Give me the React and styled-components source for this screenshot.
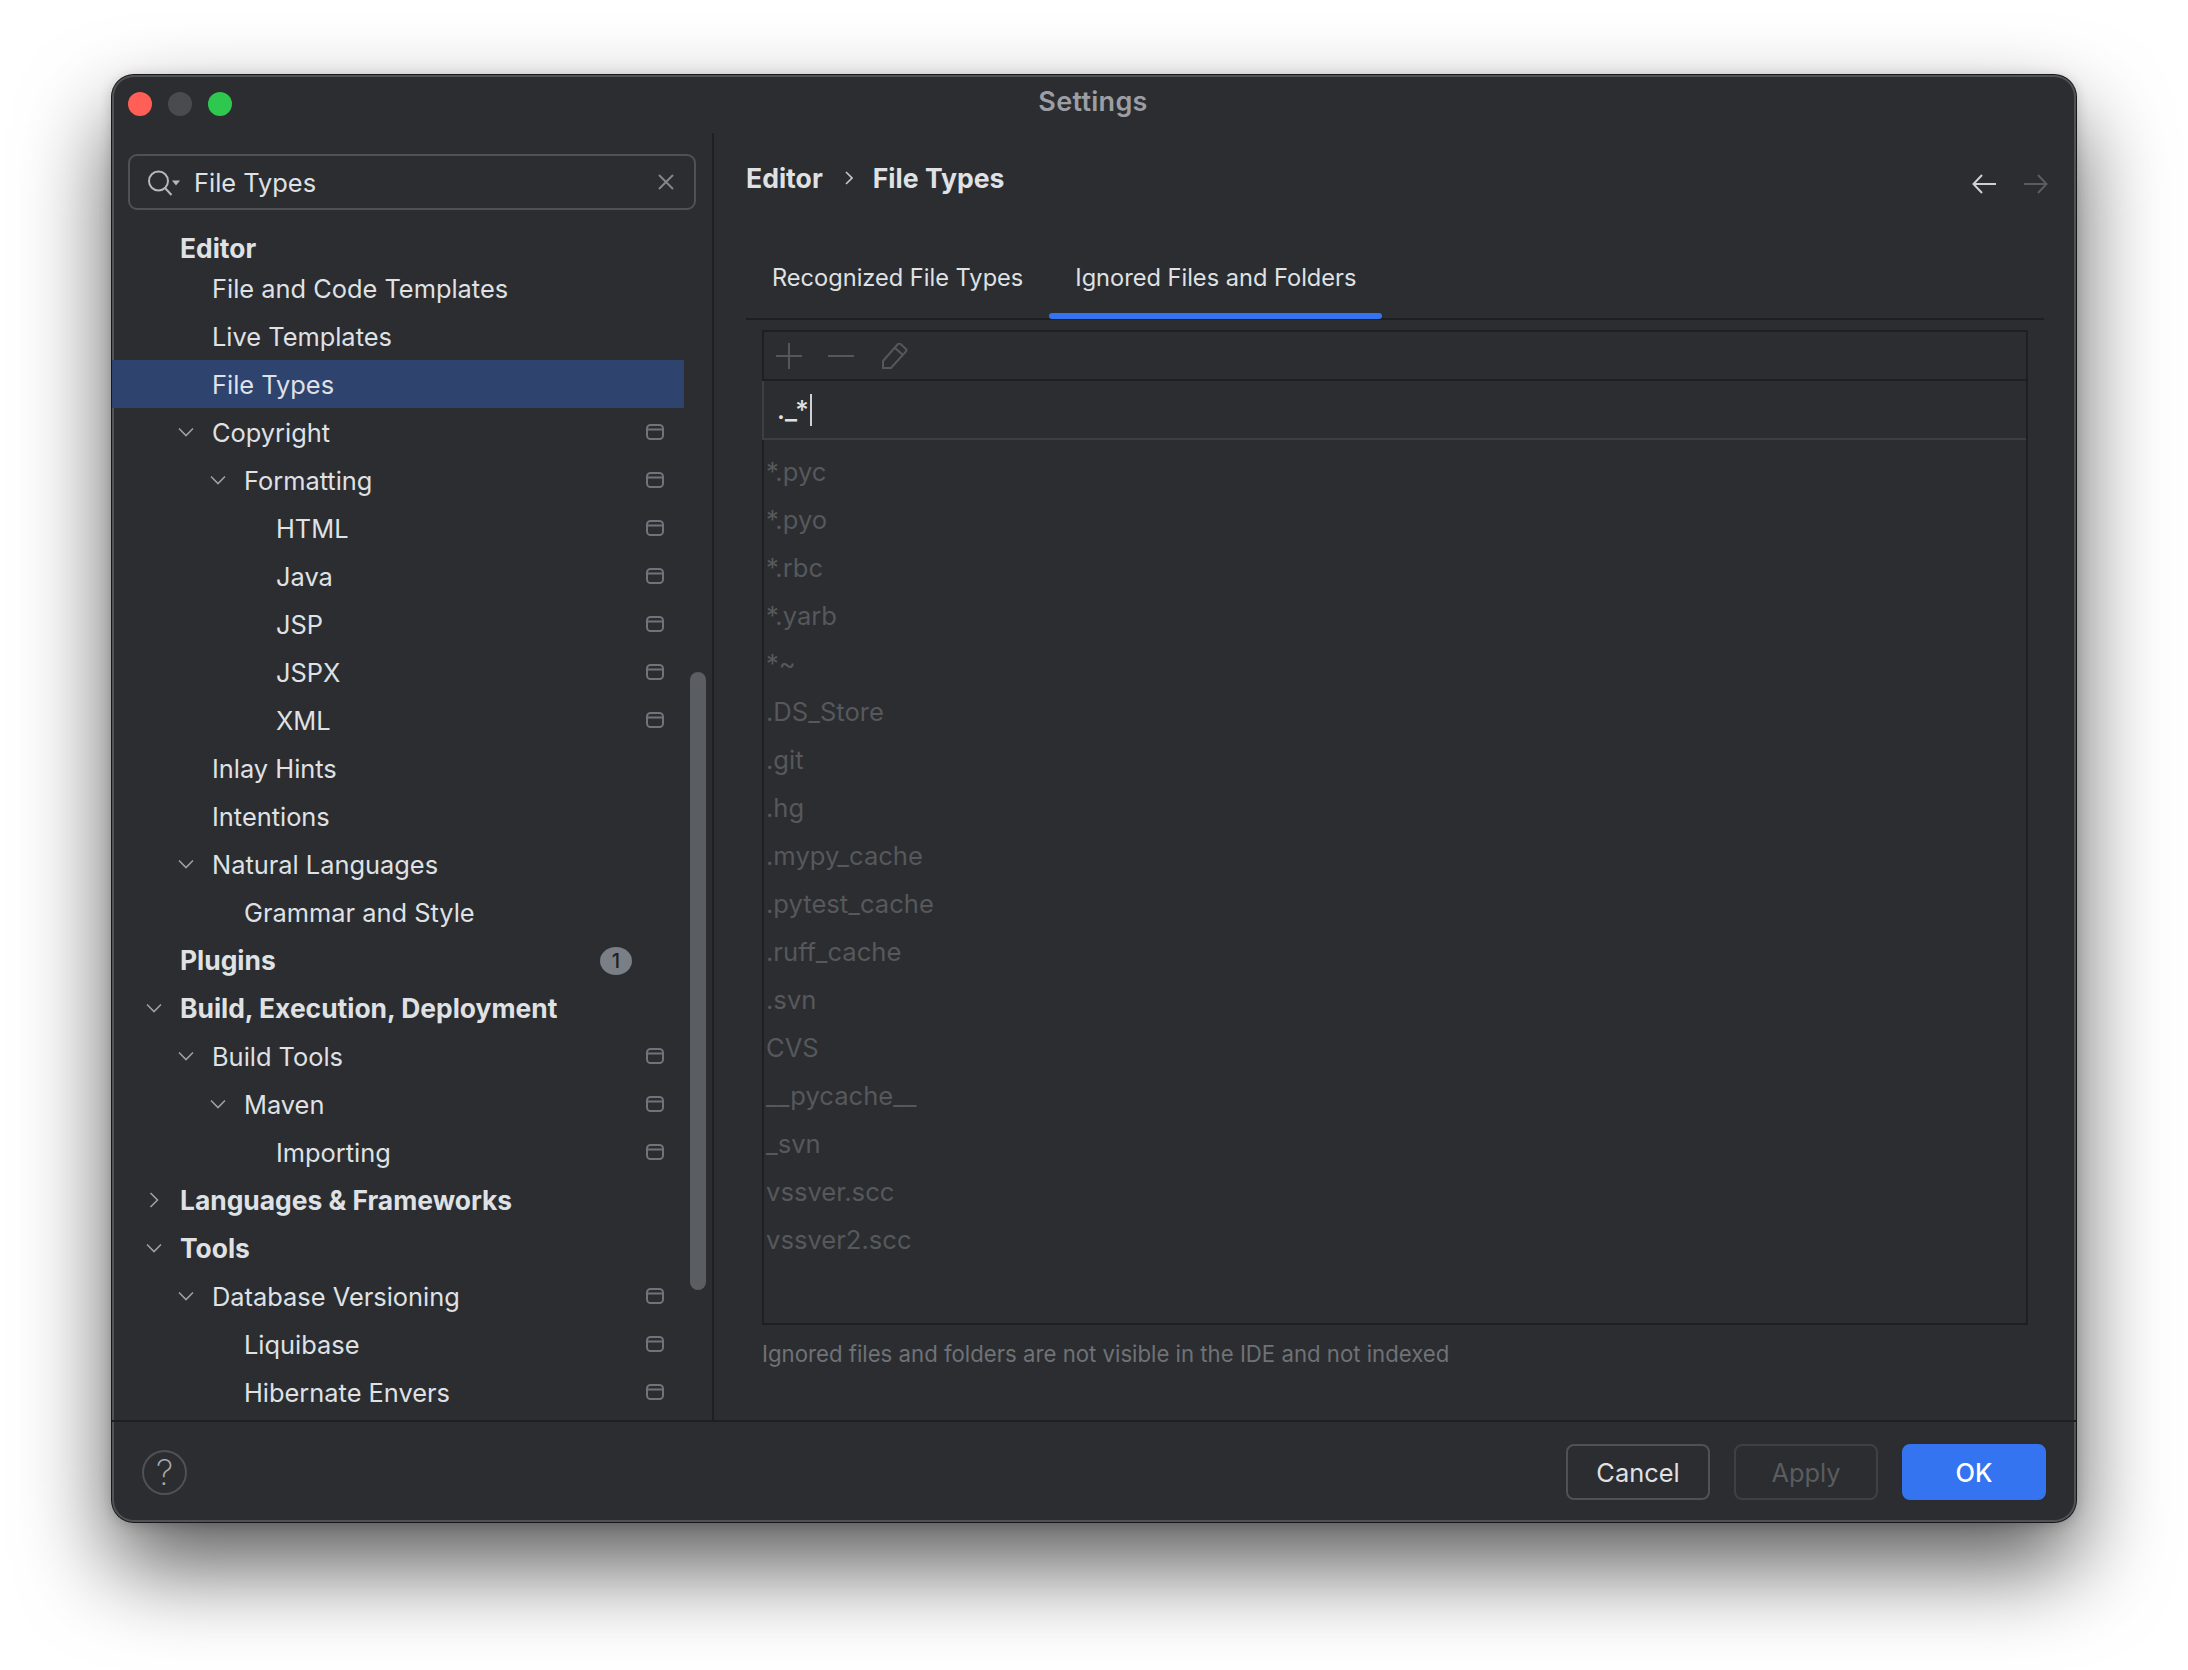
import React from 'react';
import styled, { createGlobalStyle } from 'styled-components';

const Global = createGlobalStyle`
  html, body { margin: 0; padding: 0; background: #fff; }
  body { font-family: Inter, "Liberation Sans", sans-serif; }
`;

const Stage = styled.div`
  width: 2188px;
  height: 1670px;
  box-sizing: border-box;
  padding: 75px 112px 0 112px;
  background: #fff;
  overflow: hidden;
`;

const Win = styled.div`
  width: 1964px;
  height: 1447px;
  box-sizing: border-box;
  display: grid;
  grid-template-rows: 58px 1fr 102px;
  background: #2b2d30;
  border-radius: 22px;
  overflow: hidden;
  box-shadow: inset 0 0 0 2px #505256, 0 0 0 1px #17181a, 0 44px 90px rgba(0, 0, 0, 0.65), 0 2px 14px rgba(0, 0, 0, 0.2);
`;

const TitleBar = styled.div`
  display: grid;
  grid-template-columns: 1fr auto 1fr;
  align-items: center;
  padding: 0 16px;
  height: 58px;
`;

const Lights = styled.div`
  display: flex;
  gap: 16px;
`;

const Light = styled.span`
  width: 24px;
  height: 24px;
  border-radius: 50%;
  background: ${(p) => p.$c};
`;

const Title = styled.div`
  color: #9c9ea3;
  font-size: 27px;
  font-weight: 600;
  letter-spacing: 0.3px;
  margin: -5px 0 0 -2px;
`;

const Body = styled.div`
  display: grid;
  grid-template-columns: 602px 1fr;
  min-height: 0;
`;

const Sidebar = styled.aside`
  display: flex;
  flex-direction: column;
  border-right: 2px solid #1e1f22;
  position: relative;
  min-height: 0;
  overflow: hidden;
`;

const SearchBox = styled.div`
  display: flex;
  align-items: center;
  height: 56px;
  box-sizing: border-box;
  margin: 21px 0 0 16px;
  width: 568px;
  padding: 0 20px 0 18px;
  border: 2px solid #4e5157;
  border-radius: 9px;
  color: #dfe1e5;
  font-size: 25.4px;
`;

const SearchText = styled.span`
  flex: 1;
  margin-left: 14px;
`;

const Tree = styled.div`
  display: flex;
  flex-direction: column;
  margin-top: 22px;
`;

const Row = styled.div`
  height: ${(p) => (p.$first ? 32 : 48)}px;
  flex: none;
  width: 572px;
  display: flex;
  align-items: center;
  box-sizing: border-box;
  position: relative;
  padding-left: ${(p) => 68 + p.$lvl * 32}px;
  padding-right: 20px;
  color: #dfe1e5;
  font-size: ${(p) => (p.$bold ? 26.4 : 25.4)}px;
  font-weight: ${(p) => (p.$bold ? 700 : 400)};
  background: ${(p) => (p.$sel ? '#2e436e' : 'transparent')};
`;

const RowLabel = styled.span`
  flex: 1;
  white-space: nowrap;
`;

const Chevron = styled.span`
  position: absolute;
  left: ${(p) => 34 + p.$lvl * 32}px;
  top: 16px;
  width: 16px;
  height: 16px;
  display: flex;
`;

const Badge = styled.span`
  width: 32px;
  height: 28px;
  margin: 2px 32px 0 0;
  border-radius: 50%;
  background: #7a7e85;
  color: #1e1f22;
  font-size: 20px;
  font-weight: 500;
  display: flex;
  align-items: center;
  justify-content: center;
`;

const ScrollThumb = styled.div`
  position: absolute;
  left: 578px;
  top: 539px;
  width: 16px;
  height: 618px;
  border-radius: 8px;
  background: #5a5d61;
`;

const Main = styled.main`
  display: flex;
  flex-direction: column;
  padding: 0 32px;
  min-height: 0;
`;

const Header = styled.div`
  display: flex;
  align-items: center;
  height: 36px;
  margin-top: 27px;
  font-size: 26.6px;
  font-weight: 700;
  color: #dfe1e5;
`;

const Crumb = styled.span``;

const CrumbSep = styled.span`
  display: flex;
  margin: 0 20px 0 22px;
`;

const Nav = styled.div`
  margin-left: auto;
  display: flex;
  gap: 28px;
  margin-top: 12px;
  margin-right: -4px;
`;

const Tabs = styled.div`
  display: flex;
  height: 104px;
  box-sizing: border-box;
  margin-top: 20px;
  border-bottom: 2px solid #1e1f22;
`;

const Tab = styled.div`
  height: 103px;
  flex: none;
  box-sizing: border-box;
  padding: 19px 26px 0;
  display: flex;
  align-items: center;
  color: #dfe1e5;
  font-size: 23.6px;
  position: relative;
  ${(p) => p.$active && `
    &::after {
      content: '';
      position: absolute;
      left: 0; right: 0; bottom: 0;
      height: 6px;
      border-radius: 3px;
      background: #3574f0;
    }
  `}
`;

const ListBox = styled.div`
  margin: 10px 16px 0 16px;
  height: 995px;
  box-sizing: border-box;
  border: 2px solid #1e1f22;
  display: flex;
  flex-direction: column;
`;

const Toolbar = styled.div`
  height: 47px;
  flex: none;
  display: flex;
  align-items: center;
  gap: 26px;
  padding-left: 12px;
  border-bottom: 2px solid #1e1f22;
`;

const PencilSlot = styled.span`
  display: flex;
  margin-left: 2px;
`;

const InputRow = styled.div`
  height: 59px;
  flex: none;
  box-sizing: border-box;
  display: flex;
  align-items: center;
  padding-left: 13px;
  color: #dfe1e5;
  font-size: 26px;
  font-weight: 500;
  border-bottom: 2px solid #3c3e42;
  border-left: 2px solid #3c3e42;
  margin-left: -2px;
`;

const Caret = styled.span`
  width: 2px;
  height: 32px;
  margin-left: 1px;
  background: #ced0d6;
`;

const Items = styled.div`
  display: flex;
  flex-direction: column;
  padding-top: 7px;
`;

const Item = styled.div`
  height: 48px;
  flex: none;
  display: flex;
  align-items: center;
  padding-left: 2px;
  color: #56585c;
  font-size: 25.6px;
`;

const Hint = styled.div`
  margin: 15px 0 0 16px;
  color: #6f7277;
  font-size: 22.2px;
`;

const Footer = styled.div`
  display: flex;
  align-items: center;
  border-top: 2px solid #1e1f22;
  padding: 0 30px;
`;

const Help = styled.div`
  width: 45px;
  height: 45px;
  box-sizing: border-box;
  border: 2px solid #4e5157;
  border-radius: 50%;
  display: flex;
  align-items: center;
  justify-content: center;
  color: #a8abb0;
  font-size: 35px;
  font-weight: 200;
`;

const Buttons = styled.div`
  margin-left: auto;
  display: flex;
  gap: 24px;
`;

const Btn = styled.div`
  width: 144px;
  height: 56px;
  box-sizing: border-box;
  border-radius: 8px;
  display: flex;
  align-items: center;
  justify-content: center;
  font-size: 25.4px;
  border: 2px solid ${(p) => (p.$primary ? '#3574f0' : p.$off ? '#3e4044' : '#4e5157')};
  background: ${(p) => (p.$primary ? '#3574f0' : 'transparent')};
  color: ${(p) => (p.$primary ? '#fff' : p.$off ? '#5a5c60' : '#dfe1e5')};
  font-weight: ${(p) => (p.$primary ? 500 : 400)};
`;

const ChevDown = () => (
  <svg width="16" height="16" viewBox="0 0 16 16" fill="none" stroke="#9da0a8" strokeWidth="1.6">
    <path d="M1 4.5 8 11.5 15 4.5" />
  </svg>
);
const ChevRight = () => (
  <svg width="16" height="16" viewBox="0 0 16 16" fill="none" stroke="#9da0a8" strokeWidth="1.6">
    <path d="M4.5 1 11.5 8 4.5 15" />
  </svg>
);
const ProjectIcon = () => (
  <svg width="18" height="16" viewBox="0 0 18 16" fill="none" stroke="#6f737a" strokeWidth="2">
    <rect x="1" y="1" width="16" height="14" rx="3.5" />
    <path d="M1 5.5H17" />
  </svg>
);
const SearchIcon = () => (
  <svg width="32" height="28" viewBox="0 0 32 28" fill="none">
    <circle cx="10.5" cy="13" r="9.5" stroke="#b4b8bf" strokeWidth="2" />
    <path d="M17 20 23.5 27" stroke="#b4b8bf" strokeWidth="2" />
    <path d="M24 12.5h8l-4 5z" fill="#b4b8bf" />
  </svg>
);
const CloseIcon = () => (
  <svg width="16" height="16" viewBox="0 0 16 16" fill="none" stroke="#83868c" strokeWidth="2">
    <path d="M1 1 15 15M15 1 1 15" />
  </svg>
);
const ArrowLeft = ({ c }) => (
  <svg width="24" height="20" viewBox="0 0 24 20" fill="none" stroke={c} strokeWidth="2">
    <path d="M24 10H1.5M10 1 1.5 10 10 19" />
  </svg>
);
const ArrowRight = ({ c }) => (
  <svg width="24" height="20" viewBox="0 0 24 20" fill="none" stroke={c} strokeWidth="2">
    <path d="M0 10H22.5M14 1 22.5 10 14 19" />
  </svg>
);
const PlusIcon = () => (
  <svg width="26" height="26" viewBox="0 0 26 26" stroke="#55575b" strokeWidth="2">
    <path d="M13 0V26M0 13H26" />
  </svg>
);
const MinusIcon = () => (
  <svg width="26" height="26" viewBox="0 0 26 26" stroke="#55575b" strokeWidth="2">
    <path d="M0 13H26" />
  </svg>
);
const PencilIcon = () => (
  <svg width="26" height="26" viewBox="0 0 26 26" fill="none" stroke="#55575b" strokeWidth="2">
    <path d="M1 25V18 L16 1 Q17 0 18.5 1 L24 6 Q25 7 24 8.5 L9 25ZM13 5 21 12" />
  </svg>
);

const tree = [
  { t: 'Editor', lvl: 0, bold: true, first: true },
  { t: 'File and Code Templates', lvl: 1 },
  { t: 'Live Templates', lvl: 1 },
  { t: 'File Types', lvl: 1, sel: true },
  { t: 'Copyright', lvl: 1, ch: 'd', p: true },
  { t: 'Formatting', lvl: 2, ch: 'd', p: true },
  { t: 'HTML', lvl: 3, p: true },
  { t: 'Java', lvl: 3, p: true },
  { t: 'JSP', lvl: 3, p: true },
  { t: 'JSPX', lvl: 3, p: true },
  { t: 'XML', lvl: 3, p: true },
  { t: 'Inlay Hints', lvl: 1 },
  { t: 'Intentions', lvl: 1 },
  { t: 'Natural Languages', lvl: 1, ch: 'd' },
  { t: 'Grammar and Style', lvl: 2 },
  { t: 'Plugins', lvl: 0, bold: true, badge: '1' },
  { t: 'Build, Execution, Deployment', lvl: 0, bold: true, ch: 'd' },
  { t: 'Build Tools', lvl: 1, ch: 'd', p: true },
  { t: 'Maven', lvl: 2, ch: 'd', p: true },
  { t: 'Importing', lvl: 3, p: true },
  { t: 'Languages & Frameworks', lvl: 0, bold: true, ch: 'r' },
  { t: 'Tools', lvl: 0, bold: true, ch: 'd' },
  { t: 'Database Versioning', lvl: 1, ch: 'd', p: true },
  { t: 'Liquibase', lvl: 2, p: true },
  { t: 'Hibernate Envers', lvl: 2, p: true },
];

const ignored = ['*.pyc', '*.pyo', '*.rbc', '*.yarb', '*~', '.DS_Store', '.git', '.hg', '.mypy_cache', '.pytest_cache', '.ruff_cache', '.svn', 'CVS', '__pycache__', '_svn', 'vssver.scc', 'vssver2.scc'];

export default function App() {
  return (
    <Stage>
      <Global />
      <Win>
        <TitleBar>
          <Lights>
            <Light $c="#ff5f57" />
            <Light $c="#4a4b4e" />
            <Light $c="#2fc84f" />
          </Lights>
          <Title>Settings</Title>
        </TitleBar>
        <Body>
          <Sidebar>
            <SearchBox>
              <SearchIcon />
              <SearchText>File Types</SearchText>
              <CloseIcon />
            </SearchBox>
            <Tree>
              {tree.map((r) => (
                <Row key={r.t} $lvl={r.lvl} $bold={r.bold} $sel={r.sel} $first={r.first}>
                  {r.ch && <Chevron $lvl={r.lvl}>{r.ch === 'd' ? <ChevDown /> : <ChevRight />}</Chevron>}
                  <RowLabel>{r.t}</RowLabel>
                  {r.p && <ProjectIcon />}
                  {r.badge && <Badge>{r.badge}</Badge>}
                </Row>
              ))}
            </Tree>
            <ScrollThumb />
          </Sidebar>
          <Main>
            <Header>
              <Crumb>Editor</Crumb>
              <CrumbSep>
                <svg width="8" height="14" viewBox="0 0 8 14" fill="none" stroke="#c4c6ca" strokeWidth="1.6">
                  <path d="M1 1 7 7 1 13" />
                </svg>
              </CrumbSep>
              <Crumb>File Types</Crumb>
              <Nav>
                <ArrowLeft c="#ced0d6" />
                <ArrowRight c="#5a5c60" />
              </Nav>
            </Header>
            <Tabs>
              <Tab>Recognized File Types</Tab>
              <Tab $active>Ignored Files and Folders</Tab>
            </Tabs>
            <ListBox>
              <Toolbar>
                <PlusIcon />
                <MinusIcon />
                <PencilSlot>
                  <PencilIcon />
                </PencilSlot>
              </Toolbar>
              <InputRow>
                ._*
                <Caret />
              </InputRow>
              <Items>
                {ignored.map((i) => (
                  <Item key={i}>{i}</Item>
                ))}
              </Items>
            </ListBox>
            <Hint>Ignored files and folders are not visible in the IDE and not indexed</Hint>
          </Main>
        </Body>
        <Footer>
          <Help>?</Help>
          <Buttons>
            <Btn>Cancel</Btn>
            <Btn $off>Apply</Btn>
            <Btn $primary>OK</Btn>
          </Buttons>
        </Footer>
      </Win>
    </Stage>
  );
}
